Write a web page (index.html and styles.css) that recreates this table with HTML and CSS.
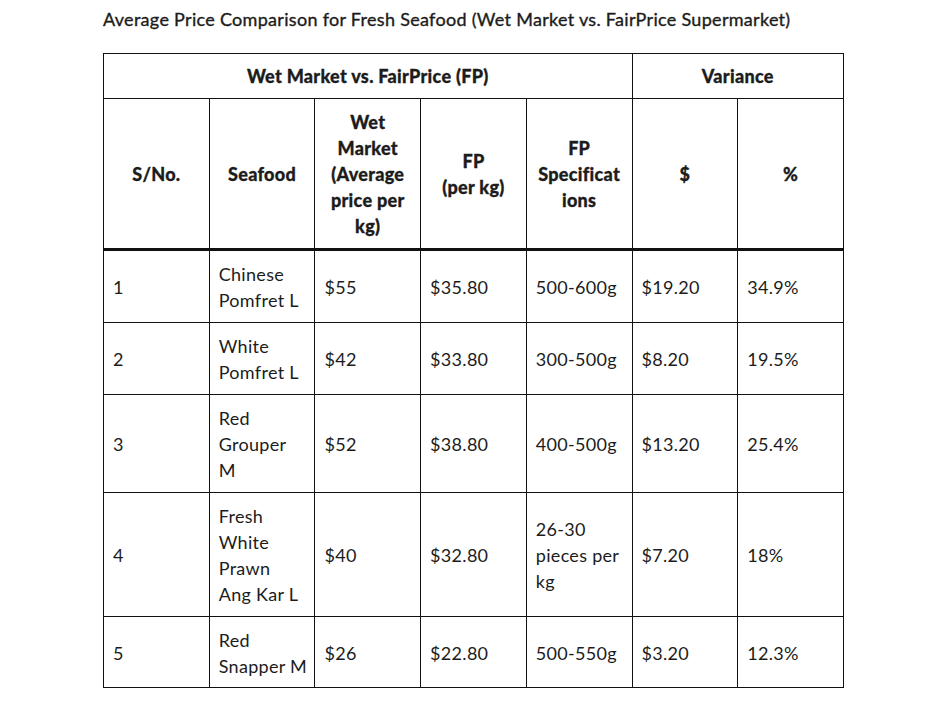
FILE: index.html
```html
<!DOCTYPE html>
<html>
<head>
<meta charset="utf-8">
<link rel="stylesheet" href="styles.css">
</head>
<body>
<div class="page">
  <h2 class="title">Average Price Comparison for Fresh Seafood (Wet Market vs. FairPrice Supermarket)</h2>
  <table class="grid">
    <colgroup>
      <col><col><col><col><col><col><col>
    </colgroup>
    <thead>
      <tr class="group-row">
        <th colspan="5">Wet Market vs. FairPrice (FP)</th>
        <th colspan="2">Variance</th>
      </tr>
      <tr class="head-row">
        <th>S/No.</th>
        <th>Seafood</th>
        <th>Wet Market (Average price per kg)</th>
        <th>FP<br>(per kg)</th>
        <th>FP Specificat ions</th>
        <th>$</th>
        <th>%</th>
      </tr>
    </thead>
    <tbody>
      <tr>
        <td>1</td><td>Chinese Pomfret L</td><td>$55</td><td>$35.80</td><td>500-600g</td><td>$19.20</td><td>34.9%</td>
      </tr>
      <tr>
        <td>2</td><td>White Pomfret L</td><td>$42</td><td>$33.80</td><td>300-500g</td><td>$8.20</td><td>19.5%</td>
      </tr>
      <tr>
        <td>3</td><td>Red Grouper<br>M</td><td>$52</td><td>$38.80</td><td>400-500g</td><td>$13.20</td><td>25.4%</td>
      </tr>
      <tr>
        <td>4</td><td>Fresh White Prawn<br>Ang Kar L</td><td>$40</td><td>$32.80</td><td>26-30 pieces per kg</td><td>$7.20</td><td>18%</td>
      </tr>
      <tr>
        <td>5</td><td>Red <span class="nowrap">Snapper M</span></td><td>$26</td><td>$22.80</td><td>500-550g</td><td>$3.20</td><td>12.3%</td>
      </tr>
    </tbody>
  </table>
</div>
</body>
</html>
```

FILE: styles.css
```css
html, body {
  margin: 0;
  padding: 0;
  background: #ffffff;
}

body {
  font-family: Lato, "Open Sans", sans-serif;
  color: #1c1c1c;
}

.page {
  padding: 8px 0 0 103px;
}

.title {
  margin: 0 0 22px 0;
  font-size: 18px;
  font-weight: 400;
  line-height: 23px;
  letter-spacing: 0.3px;
  color: #1c1c1c;
  -webkit-text-stroke: 0.35px #1c1c1c;
}

.grid {
  border-collapse: collapse;
  table-layout: fixed;
  width: 741px;
  font-size: 18px;
  line-height: 26px;
}

.grid th,
.grid td {
  border: 1px solid #111111;
  padding: 10px 8px 9px 9px;
  vertical-align: middle;
}

.grid th {
  font-weight: 900;
  text-align: center;
  letter-spacing: 0.3px;
  padding-left: 9px;
  padding-right: 9px;
  -webkit-text-stroke: 0.3px #1c1c1c;
}

.group-row th {
  padding-top: 9px;
  padding-bottom: 9px;
}

.head-row th {
  border-bottom: 3px solid #111111;
}

.grid td {
  text-align: left;
  font-weight: 400;
  letter-spacing: 0.3px;
}

.grid tbody tr:last-child td {
  padding-bottom: 8px;
}

.nowrap {
  white-space: nowrap;
}
```
